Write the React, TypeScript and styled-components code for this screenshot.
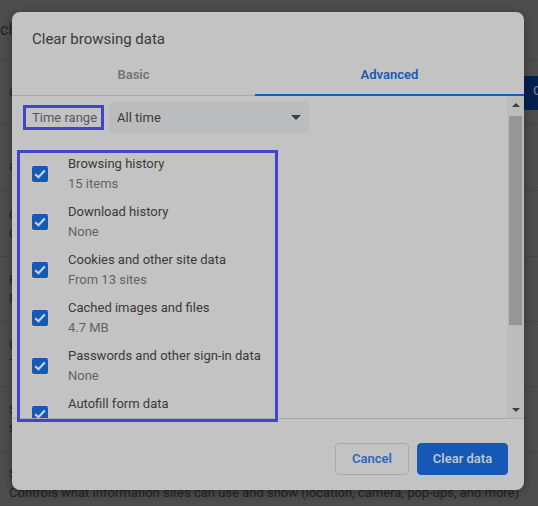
import styled, { createGlobalStyle } from "styled-components";

const GlobalStyle = createGlobalStyle`
  html, body {
    margin: 0;
    padding: 0;
    height: 100%;
    background: #4e4e4e;
    font-family: Roboto, "Liberation Sans", sans-serif;
  }
`;

const Page = styled.div`
  position: relative;
  width: 538px;
  height: 506px;
  overflow: hidden;
  background: #4e4e4e;
`;

const SettingsList = styled.div`
  display: flex;
  flex-direction: column;
`;

const SettingsRow = styled.div<{ $height: number; $offset?: number }>`
  display: flex;
  flex-direction: column;
  justify-content: center;
  gap: 6px;
  box-sizing: border-box;
  height: ${({ $height }) => $height}px;
  padding-left: 9px;
  padding-top: ${({ $offset }) => $offset ?? 0}px;
  border-bottom: 1px solid #454545;
  font-size: 13px;
  line-height: 13px;
  color: #242424;
`;

const SectionTitle = styled.div`
  margin-left: -9px;
  font-size: 16px;
  line-height: 18px;
`;

const OuterButton = styled.div`
  position: absolute;
  top: 76px;
  right: 0;
  box-sizing: border-box;
  width: 14px;
  height: 34px;
  padding-left: 9px;
  overflow: hidden;
  background: #04224f;
  color: #6a7687;
  font-size: 13px;
  font-weight: 500;
  line-height: 30px;
`;

const Dialog = styled.div`
  position: absolute;
  top: 12px;
  left: 12px;
  display: flex;
  flex-direction: column;
  width: 512px;
  height: 478px;
  overflow: hidden;
  background: #c3c3c3;
  border-radius: 8px;
  box-shadow: 0 2px 12px rgba(0, 0, 0, 0.35);
`;

const DialogTitle = styled.div`
  padding: 18px 20px 0;
  height: 32px;
  color: #3a3a3a;
  font-size: 15px;
  line-height: 18px;
`;

const Tabs = styled.div`
  display: flex;
  height: 35px;
  margin-top: -1px;
`;

const Tab = styled.div<{ $active?: boolean; $width: number }>`
  box-sizing: border-box;
  width: ${({ $width }) => $width}px;
  height: 35px;
  padding-top: 5px;
  text-align: center;
  font-size: 13px;
  font-weight: 600;
  line-height: 17px;
  color: ${({ $active }) => ($active ? "#1a5bb5" : "#747577")};
  border-bottom: ${({ $active }) =>
    $active ? "2px solid #1a5bb5" : "1px solid #a9a9a9"};
`;

const Body = styled.div`
  display: flex;
  height: 322px;
  border-bottom: 1px solid #a9a9a9;
`;

const Scroller = styled.div`
  flex: 1;
  overflow: hidden;
`;

const RangeRow = styled.div`
  display: flex;
  align-items: center;
  gap: 12px;
  margin: 6px 0 0 20px;
`;

const RangeLabel = styled.div`
  margin-bottom: 2px;
  color: #59595b;
  font-size: 13px;
`;

const RangeSelect = styled.div`
  display: flex;
  align-items: center;
  justify-content: space-between;
  box-sizing: border-box;
  width: 200px;
  height: 32px;
  padding: 0 8px 2px;
  background: #bbbcbe;
  border-radius: 4px;
  color: #3a3a3a;
  font-size: 13px;
`;

const Options = styled.div`
  display: flex;
  flex-direction: column;
  gap: 8px;
  margin: 20px 0 0 20px;
`;

const Option = styled.div`
  display: flex;
  align-items: center;
  gap: 20px;
  height: 40px;
`;

const CheckBox = styled.div`
  display: flex;
  align-items: center;
  justify-content: center;
  flex: none;
  width: 16px;
  height: 16px;
  background: #1558b5;
  border-radius: 2px;
`;

const OptionText = styled.div`
  display: flex;
  flex-direction: column;
  gap: 5px;
  height: 35px;
  margin-bottom: 2px;
  font-size: 13px;
  line-height: 15px;
  color: #3a3a3a;
`;

const OptionHint = styled.div`
  color: #626365;
`;

const ScrollTrack = styled.div`
  display: flex;
  flex-direction: column;
  align-items: center;
  width: 17px;
  background: #bcbcbc;
`;

const ScrollArrow = styled.div`
  display: flex;
  align-items: center;
  justify-content: center;
  flex: none;
  width: 100%;
  height: 17px;
`;

const ScrollThumb = styled.div`
  flex: none;
  width: 13px;
  height: 209px;
  margin-top: 3px;
  background: #969696;
`;

const ScrollSpacer = styled.div`
  flex: 1;
`;

const Footer = styled.div`
  display: flex;
  justify-content: flex-end;
  gap: 8px;
  padding: 24px 16px 0 0;
`;

const Button = styled.div<{ $primary?: boolean }>`
  display: flex;
  align-items: center;
  justify-content: center;
  box-sizing: border-box;
  height: 32px;
  width: ${({ $primary }) => ($primary ? 91 : 74)}px;
  padding-bottom: 2px;
  border-radius: 4px;
  font-size: 13px;
  font-weight: 600;
  color: ${({ $primary }) => ($primary ? "#bdc6d4" : "#2f68bd")};
  background: ${({ $primary }) => ($primary ? "#1558b5" : "transparent")};
  border: 1px solid ${({ $primary }) => ($primary ? "#1558b5" : "#a9a9a9")};
`;

const Highlight = styled.div<{
  $top: number;
  $left: number;
  $width: number;
  $height: number;
}>`
  position: absolute;
  top: ${({ $top }) => $top}px;
  left: ${({ $left }) => $left}px;
  width: ${({ $width }) => $width}px;
  height: ${({ $height }) => $height}px;
  box-sizing: border-box;
  border: 3px solid #4343cf;
  pointer-events: none;
`;

const Triangle = ({ down, width = 10 }: { down?: boolean; width?: number }) => (
  <svg width={width} height={width / 2} viewBox="0 0 10 5" aria-hidden="true">
    <path d={down ? "M0 0h10L5 5z" : "M0 5h10L5 0z"} fill="#3d3d3d" />
  </svg>
);

const CheckMark = () => (
  <svg width="12" height="10" viewBox="0 0 12 10" aria-hidden="true">
    <path d="M1.2 5.2 4.4 8.2 10.8 1.4" fill="none" stroke="#c8d2e2" strokeWidth="2.2" />
  </svg>
);

const rows = [
  { height: 60, title: "ch", offset: 0 },
  { height: 65, lines: ["C"], offset: 0 },
  { height: 66, lines: ["a"], offset: 16 },
  { height: 66, lines: ["C", "C"], offset: 0 },
  { height: 65, lines: ["F", "F"], offset: 0 },
  { height: 65, lines: ["C", "T"], offset: 0 },
  { height: 65, lines: ["S", "S"], offset: 0 },
];

const options = [
  { label: "Browsing history", hint: "15 items" },
  { label: "Download history", hint: "None" },
  { label: "Cookies and other site data", hint: "From 13 sites" },
  { label: "Cached images and files", hint: "4.7 MB" },
  { label: "Passwords and other sign-in data", hint: "None" },
  { label: "Autofill form data" },
];

export default function App() {
  return (
    <Page>
      <GlobalStyle />
      <SettingsList>
        {rows.map((row, i) => (
          <SettingsRow key={i} $height={row.height} $offset={row.offset}>
            {row.title && <SectionTitle>{row.title}</SectionTitle>}
            {row.lines?.map((line, j) => <div key={j}>{line}</div>)}
          </SettingsRow>
        ))}
        <SettingsRow $height={54} $offset={8}>
          <div>Site settings</div>
          <div>Controls what information sites can use and show (location, camera, pop-ups, and more)</div>
        </SettingsRow>
      </SettingsList>
      <OuterButton>C</OuterButton>
      <Dialog>
        <DialogTitle>Clear browsing data</DialogTitle>
        <Tabs>
          <Tab $width={243}>Basic</Tab>
          <Tab $width={269} $active>Advanced</Tab>
        </Tabs>
        <Body>
          <Scroller>
            <RangeRow>
              <RangeLabel>Time range</RangeLabel>
              <RangeSelect>
                All time
                <Triangle down />
              </RangeSelect>
            </RangeRow>
            <Options>
              {options.map((option) => (
                <Option key={option.label}>
                  <CheckBox>
                    <CheckMark />
                  </CheckBox>
                  <OptionText>
                    {option.label}
                    {option.hint && <OptionHint>{option.hint}</OptionHint>}
                  </OptionText>
                </Option>
              ))}
            </Options>
          </Scroller>
          <ScrollTrack>
            <ScrollArrow>
              <Triangle width={8} />
            </ScrollArrow>
            <ScrollThumb />
            <ScrollSpacer />
            <ScrollArrow>
              <Triangle down width={8} />
            </ScrollArrow>
          </ScrollTrack>
        </Body>
        <Footer>
          <Button>Cancel</Button>
          <Button $primary>Clear data</Button>
        </Footer>
      </Dialog>
      <Highlight $top={105} $left={23} $width={81} $height={25} />
      <Highlight $top={150} $left={17} $width={261} $height={272} />
    </Page>
  );
}
